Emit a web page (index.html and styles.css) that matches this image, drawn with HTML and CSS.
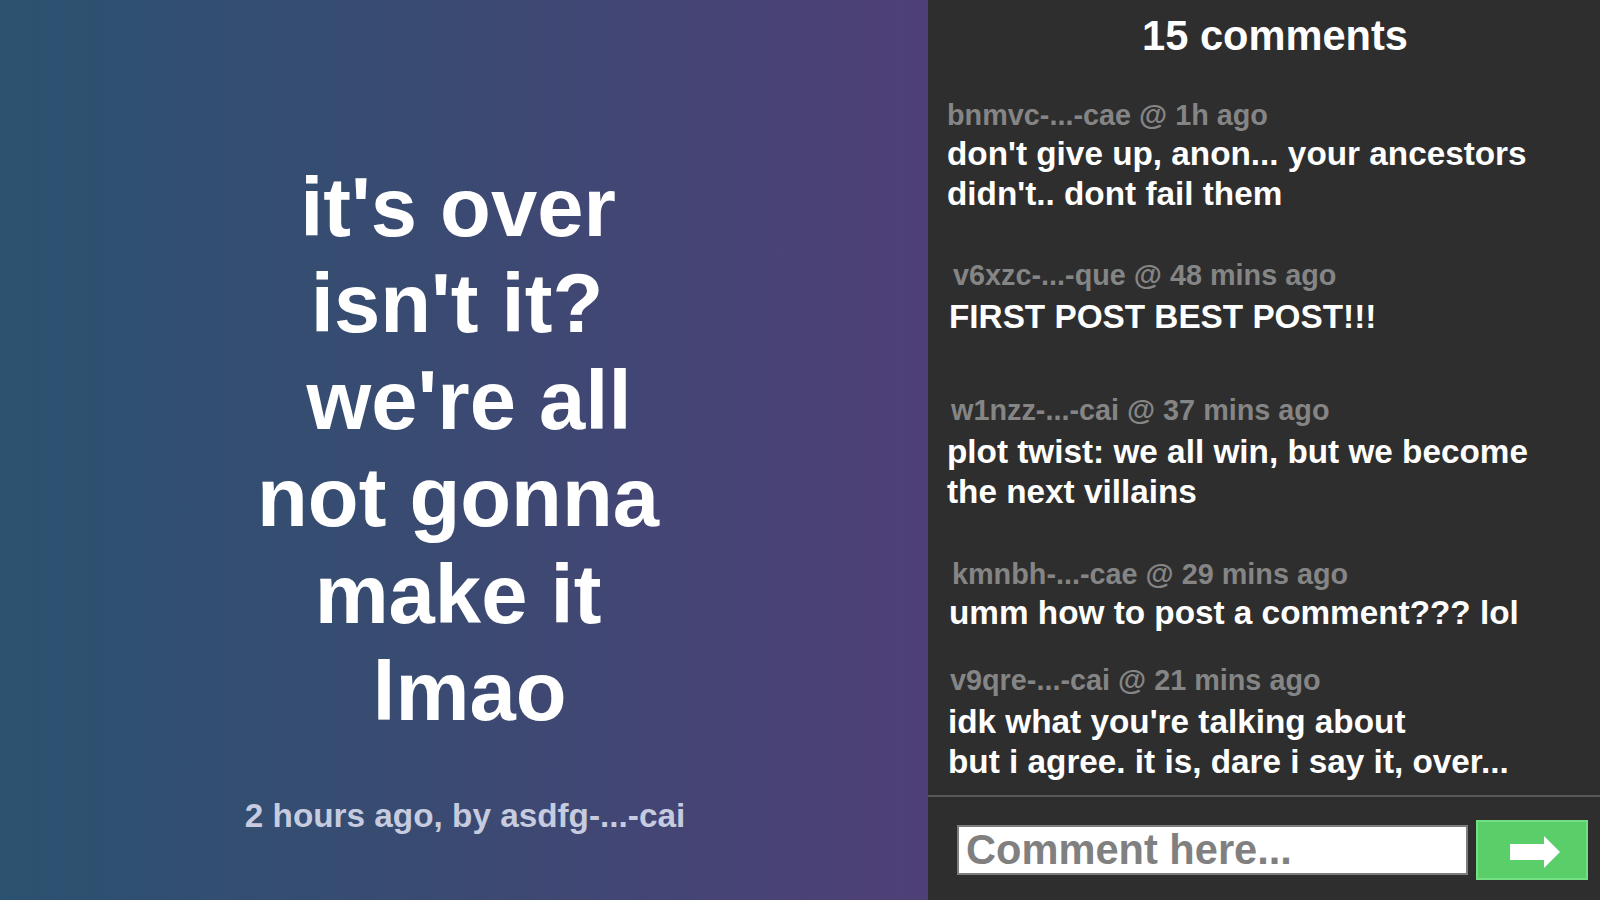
FILE: index.html
```html
<!DOCTYPE html>
<html lang="en">
<head>
<meta charset="utf-8">
<title>it's over</title>
<link rel="stylesheet" href="styles.css">
</head>
<body>
<main class="page">
  <section class="post">
    <h1 class="post-title">
      <span class="line l1">it's over</span>
      <span class="line l2">isn't it?</span>
      <span class="line l3">we're all</span>
      <span class="line l4">not gonna</span>
      <span class="line l5">make it</span>
      <span class="line l6">lmao</span>
    </h1>
    <p class="post-meta">2 hours ago, by asdfg-...-cai</p>
  </section>
  <aside class="comments">
    <h2 class="comments-title">15 comments</h2>
    <ul class="comment-list">
      <li class="comment c1">
        <div class="comment-meta">bnmvc-...-cae @ 1h ago</div>
        <div class="comment-body">don't give up, anon... your ancestors didn't.. dont fail them</div>
      </li>
      <li class="comment c2">
        <div class="comment-meta">v6xzc-...-que @ 48 mins ago</div>
        <div class="comment-body">FIRST POST BEST POST!!!</div>
      </li>
      <li class="comment c3">
        <div class="comment-meta">w1nzz-...-cai @ 37 mins ago</div>
        <div class="comment-body">plot twist: we all win, but we become the next villains</div>
      </li>
      <li class="comment c4">
        <div class="comment-meta">kmnbh-...-cae @ 29 mins ago</div>
        <div class="comment-body">umm how to post a comment??? lol</div>
      </li>
      <li class="comment c5">
        <div class="comment-meta">v9qre-...-cai @ 21 mins ago</div>
        <div class="comment-body">idk what you're talking about<br>but i agree. it is, dare i say it, over...</div>
      </li>
    </ul>
    <form class="comment-form" onsubmit="return false;">
      <input class="comment-input" type="text" placeholder="Comment here...">
      <button class="send-btn" type="submit" aria-label="Send">
        <svg width="50" height="32" viewBox="0 0 50 32" aria-hidden="true">
          <path d="M0 8 H34 V0 L50 16 L34 32 V24 H0 Z" fill="#ffffff"/>
        </svg>
      </button>
    </form>
  </aside>
</main>
</body>
</html>
```

FILE: styles.css
```css
* {
  box-sizing: border-box;
}

html, body {
  margin: 0;
  padding: 0;
  height: 100%;
}

body {
  font-family: "Liberation Sans", Arial, Helvetica, sans-serif;
  font-weight: bold;
  background: #2e2e2e;
  overflow: hidden;
}

.page {
  display: flex;
  width: 1600px;
  height: 900px;
}

/* ---------- left: the post ---------- */
.post {
  width: 928px;
  flex: 0 0 928px;
  min-width: 0;
  height: 100%;
  background: linear-gradient(to right, #2b5270 0%, #3b4a72 50%, #4f3f78 100%);
  display: grid;
  grid-template-rows: 1fr auto 1fr;
  justify-items: center;
}

.post-title {
  grid-row: 2;
  margin: 0;
  color: #ffffff;
  font-size: 83.2px;
  line-height: 96.8px;
  font-weight: bold;
  text-align: center;
}

.line {
  display: block;
}

.l1 { padding-right: 12px; }
.l2 { padding-right: 14px; }
.l3 { padding-left: 10px; }
.l4 { padding-right: 12px; }
.l5 { padding-right: 12px; }
.l6 { padding-left: 11px; }

.post-meta {
  grid-row: 3;
  align-self: start;
  margin: 57px 0 0 2px;
  color: #c6cbdf;
  font-size: 33.3px;
  line-height: normal;
}

/* ---------- right: comments ---------- */
.comments {
  flex: 0 0 672px;
  width: 672px;
  min-width: 0;
  height: 100%;
  background: #2e2e2e;
  display: flex;
  flex-direction: column;
}

.comments-title {
  margin: 12px 0 0;
  padding-left: 22px;
  text-align: center;
  color: #ffffff;
  font-size: 41.6px;
  line-height: normal;
  font-weight: bold;
}

.comment-list {
  list-style: none;
  margin: 0;
  padding: 0 24px 0 19px;
  flex: 1 1 auto;
  min-height: 0;
  overflow: hidden;
}

.comment-meta {
  color: #858585;
  font-size: 28.8px;
  line-height: normal;
}

.comment-body {
  color: #ffffff;
  font-size: 33.3px;
  line-height: 40px;
}

/* each comment sits a little off the grid, as in the original */
.c1 { margin-top: 38.5px; }
.c1 .comment-body { margin-top: 2px; }

.c2 { margin-top: 45px; }
.c2 .comment-meta { padding-left: 6px; }
.c2 .comment-body { margin-top: 5px; padding-left: 2px; }

.c3 { margin-top: 57px; }
.c3 .comment-meta { padding-left: 4px; }
.c3 .comment-body { margin-top: 5px; }

.c4 { margin-top: 46.8px; }
.c4 .comment-meta { padding-left: 5px; }
.c4 .comment-body { margin-top: 2px; padding-left: 2px; }

.c5 { margin-top: 30.5px; }
.c5 .comment-meta { padding-left: 3px; }
.c5 .comment-body { margin-top: 5.4px; padding-left: 1px; }

.comment-form {
  flex: 0 0 105px;
  border-top: 2px solid #585858;
  display: flex;
  align-items: center;
  gap: 8px;
  padding: 3px 12px 0 29px;
  margin: 0;
}

.comment-input {
  flex: 1 1 0;
  width: 0;
  min-width: 0;
  height: 50px;
  margin: 0;
  padding: 0 7px;
  border: 2px solid #7d7d7d;
  border-radius: 0;
  background: #ffffff;
  font-family: "Liberation Sans", Arial, Helvetica, sans-serif;
  font-weight: bold;
  font-size: 41.6px;
  color: #333333;
  outline: none;
}

.comment-input::placeholder {
  color: #808080;
  opacity: 1;
}

.send-btn {
  flex: 0 0 112px;
  width: 112px;
  height: 60px;
  margin: 0;
  padding: 4px 0 0 6px;
  border: 2px solid #74df82;
  border-radius: 0;
  background: #5acf69;
  display: flex;
  align-items: center;
  justify-content: center;
  cursor: pointer;
}

.send-btn svg {
  display: block;
}
```
